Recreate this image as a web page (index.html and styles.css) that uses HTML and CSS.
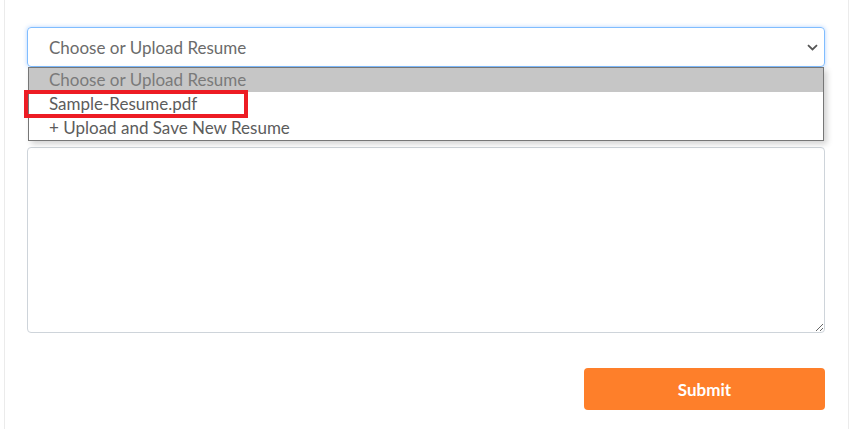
FILE: index.html
```html
<!DOCTYPE html>
<html lang="en">
<head>
<meta charset="utf-8">
<title>Resume form</title>
<link rel="stylesheet" href="styles.css">
</head>
<body>
<div class="card">
  <form class="form">
    <div class="field select-field">
      <div class="select">
        <span class="select-value">Choose or Upload Resume</span>
        <svg class="chevron" width="11" height="7" viewBox="0 0 11 7"><path d="M1 1.2 L5.5 5.4 L10 1.2" fill="none" stroke="#555" stroke-width="1.8"/></svg>
      </div>
      <ul class="dropdown">
        <li class="option selected">Choose or Upload Resume</li>
        <li class="option">Sample-Resume.pdf</li>
        <li class="option">+ Upload and Save New Resume</li>
      </ul>
      <div class="highlight"></div>
    </div>
    <div class="spacer"></div>
    <textarea class="textarea"></textarea>
    <div class="actions">
      <button type="button" class="submit">Submit</button>
    </div>
  </form>
</div>
</body>
</html>
```
FILE: styles.css
```css
html, body {
  margin: 0;
  padding: 0;
  background: #ffffff;
  font-family: "Lato", "Open Sans", sans-serif;
}
.card {
  margin-left: 4px;
  width: 845px;
  height: 429px;
  border-left: 1px solid #ebebeb;
  border-right: 1px solid #ebebeb;
  box-sizing: border-box;
  padding: 27px 23px 0 22px;
}
.form {
  display: flex;
  flex-direction: column;
}
.field {
  position: relative;
}
.select {
  height: 40px;
  box-sizing: border-box;
  border: 1px solid #80bdff;
  border-radius: 4px;
  box-shadow: 0 0 4px rgba(90, 160, 255, 0.45);
  display: flex;
  align-items: center;
  justify-content: space-between;
  padding: 0 6px 0 21px;
  color: #6b6b6b;
  font-size: 17px;
}
.chevron {
  display: block;
  margin-top: 1px;
}
.dropdown {
  position: absolute;
  left: 1px;
  top: 40px;
  width: 796px;
  box-sizing: border-box;
  margin: 0;
  padding: 0;
  list-style: none;
  background: #fff;
  border: 1px solid #767676;
  box-shadow: 3px 3px 6px rgba(0, 0, 0, 0.18);
  z-index: 2;
}
.option {
  height: 24px;
  line-height: 24px;
  padding-left: 20px;
  font-size: 17px;
  color: #5c5c5c;
}
.option.selected {
  background: #c6c6c6;
  color: #7a7a7a;
}
.highlight {
  position: absolute;
  left: -3px;
  top: 63px;
  width: 224px;
  height: 28px;
  box-sizing: border-box;
  border: 4px solid #ed1c24;
  z-index: 3;
}
.spacer {
  height: 80px;
}
.textarea {
  display: block;
  height: 186px;
  box-sizing: border-box;
  border: 1px solid #ced4da;
  border-radius: 4px;
  resize: vertical;
  width: 100%;
  margin: 0;
  font-family: inherit;
}
.actions {
  display: flex;
  justify-content: flex-end;
  margin-top: 35px;
}
.submit {
  width: 241px;
  height: 42px;
  border: none;
  border-radius: 4px;
  background: #fe7f2a;
  color: #ffffff;
  font-family: inherit;
  font-weight: 700;
  font-size: 17px;
}
```
